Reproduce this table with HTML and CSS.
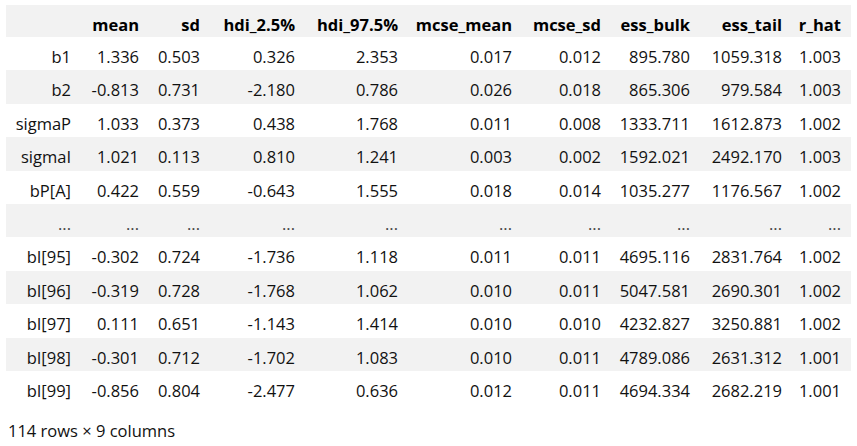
FILE: index.html
```
<!DOCTYPE html>
<html>
<head>
<meta charset="utf-8">
<link rel="stylesheet" href="styles.css">
</head>
<body>
<div class="output">
<table class="df">
<colgroup>
<col class="c-idx"><col class="c-mean"><col class="c-sd"><col class="c-h1"><col class="c-h2"><col class="c-mm"><col class="c-ms"><col class="c-eb"><col class="c-et"><col class="c-rh">
</colgroup>
<thead>
<tr><th></th><th>mean</th><th>sd</th><th>hdi_2.5%</th><th>hdi_97.5%</th><th>mcse_mean</th><th>mcse_sd</th><th>ess_bulk</th><th>ess_tail</th><th>r_hat</th></tr>
</thead>
<tbody>
<tr><th>b1</th><td>1.336</td><td>0.503</td><td>0.326</td><td>2.353</td><td>0.017</td><td>0.012</td><td>895.780</td><td>1059.318</td><td>1.003</td></tr>
<tr><th>b2</th><td>-0.813</td><td>0.731</td><td>-2.180</td><td>0.786</td><td>0.026</td><td>0.018</td><td>865.306</td><td>979.584</td><td>1.003</td></tr>
<tr><th>sigmaP</th><td>1.033</td><td>0.373</td><td>0.438</td><td>1.768</td><td>0.011</td><td>0.008</td><td>1333.711</td><td>1612.873</td><td>1.002</td></tr>
<tr><th>sigmaI</th><td>1.021</td><td>0.113</td><td>0.810</td><td>1.241</td><td>0.003</td><td>0.002</td><td>1592.021</td><td>2492.170</td><td>1.003</td></tr>
<tr><th>bP[A]</th><td>0.422</td><td>0.559</td><td>-0.643</td><td>1.555</td><td>0.018</td><td>0.014</td><td>1035.277</td><td>1176.567</td><td>1.002</td></tr>
<tr class="ell"><th>...</th><td>...</td><td>...</td><td>...</td><td>...</td><td>...</td><td>...</td><td>...</td><td>...</td><td>...</td></tr>
<tr><th>bI[95]</th><td>-0.302</td><td>0.724</td><td>-1.736</td><td>1.118</td><td>0.011</td><td>0.011</td><td>4695.116</td><td>2831.764</td><td>1.002</td></tr>
<tr><th>bI[96]</th><td>-0.319</td><td>0.728</td><td>-1.768</td><td>1.062</td><td>0.010</td><td>0.011</td><td>5047.581</td><td>2690.301</td><td>1.002</td></tr>
<tr><th>bI[97]</th><td>0.111</td><td>0.651</td><td>-1.143</td><td>1.414</td><td>0.010</td><td>0.010</td><td>4232.827</td><td>3250.881</td><td>1.002</td></tr>
<tr><th>bI[98]</th><td>-0.301</td><td>0.712</td><td>-1.702</td><td>1.083</td><td>0.010</td><td>0.011</td><td>4789.086</td><td>2631.312</td><td>1.001</td></tr>
<tr><th>bI[99]</th><td>-0.856</td><td>0.804</td><td>-2.477</td><td>0.636</td><td>0.012</td><td>0.011</td><td>4694.334</td><td>2682.219</td><td>1.001</td></tr>
</tbody>
</table>
<p class="shape">114 rows × 9 columns</p>
</div>
</body>
</html>
```
FILE: styles.css
```
html, body {
  margin: 0;
  padding: 0;
  background: #ffffff;
}
body {
  font-family: "Open Sans", "Noto Sans", "Liberation Sans", sans-serif;
  font-size: 16.5px;
  color: #111111;
}
.output {
  padding: 5px 6px 0 6px;
}
.df {
  border-collapse: collapse;
  table-layout: fixed;
  width: 845px;
  border: none;
}
.c-idx { width: 75px; }
.c-mean { width: 68px; }
.c-sd { width: 61px; }
.c-h1 { width: 95px; }
.c-h2 { width: 103px; }
.c-mm { width: 114px; }
.c-ms { width: 89px; }
.c-eb { width: 89px; }
.c-et { width: 92px; }
.c-rh { width: 59px; }
.df th, .df td {
  text-align: right;
  padding: 9px 10px 0 0;
  height: 33.4px;
  box-sizing: border-box;
  line-height: 22px;
  white-space: nowrap;
  vertical-align: top;
  border: none;
}
.df thead th {
  font-weight: 700;
  color: #000000;
  height: 32px;
}
.df tbody th {
  font-weight: 400;
}
.df thead tr,
.df tbody tr:nth-child(even) {
  background: #f2f2f2;
}
.ell td, .ell th {
  color: #444444;
}
.shape {
  margin: 16px 0 0 2px;
  line-height: 22px;
}
```
